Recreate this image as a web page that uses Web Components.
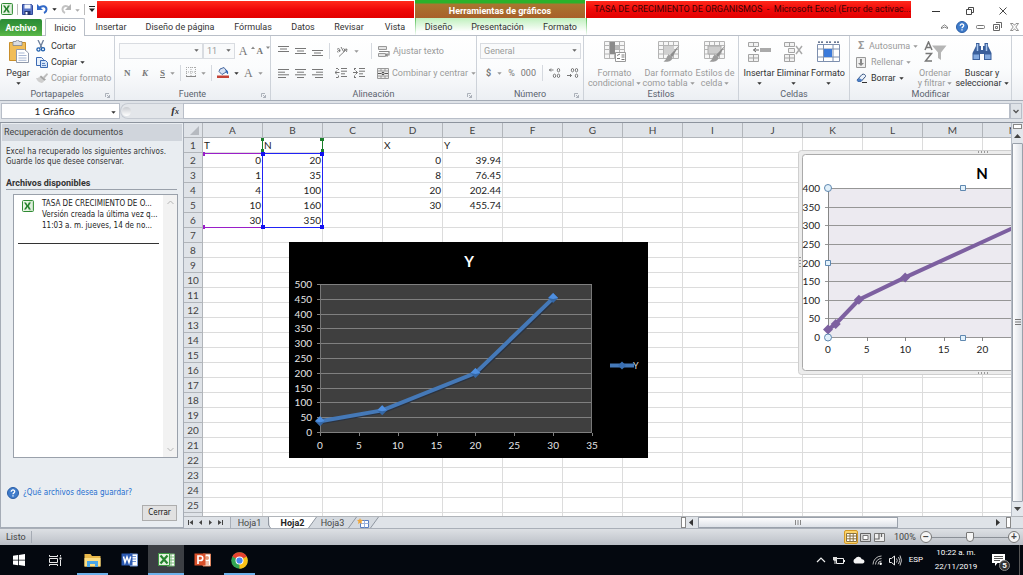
<!DOCTYPE html>
<html lang="es">
<head>
<meta charset="utf-8">
<title>TASA DE CRECIMIENTO DE ORGANISMOS - Microsoft Excel</title>
<style>
html,body{margin:0;height:100%;overflow:hidden}
body{font:9px/12px Roboto,"Open Sans",sans-serif;color:#333;background:#fff}
</style>
</head>
<body>
<excel-app></excel-app>
<script>
const RESET = `*{box-sizing:border-box}
button,input,select{font:inherit;color:inherit;background:none;border:0;margin:0;padding:0;border-radius:0;appearance:none;outline:0}
button{white-space:nowrap}a{color:inherit;text-decoration:none}svg{display:block;flex:none}`;

function make(css, html){
  const t = document.createElement('template');
  t.innerHTML = `<style>${RESET}${css}</style>${html}`;
  return t;
}
class BaseElement extends HTMLElement{
  constructor(){
    super();
    this.attachShadow({mode:'open'}).append(this.constructor.template.content.cloneNode(true));
  }
}

/* ---------- icons: [width, height, markup] ---------- */
const xl = `<rect x=".5" y=".5" width="11" height="11" rx="1" fill="#e9f5e4" stroke="#2f8a34"/><path d="M7 2h4v8H7z" fill="#fff" stroke="#7bb877" stroke-width=".5"/><path d="M7 4h4M7 6h4M7 8h4" stroke="#7bb877" stroke-width=".5"/><path d="M2 2.500h2L5.500 5 7 2.500h2L6.600 6 9 9.500H7L5.500 7 4 9.500H2L4.400 6z" fill="#23802b"/>`;
const grid3 = `<path d="M.5.5h20v17H.5zM.5 4.500h20M.5 8.500h20M.5 13h20M5.500.5v17M10.500.5v17M15.500.5v17" fill="#f6f6f6" stroke="#b4b4b4"/>`;
const brush = `<path d="M21.500 4l-9.500 10 2 2.500z" fill="#8d8d8d"/><path d="M12 14c-2 0-3 1-3.500 3S6 20 5.500 20.500c4 1 8.500 0 9-4z" fill="#9b9b9b"/>`;
const ICONS = {
  excel:[12,12,xl],
  save:[11,11,`<path d="M.5.5h9l1 1v9H.5z" fill="#5a76c8" stroke="#31489a"/><path d="M2.500.500h6v4h-6z" fill="#f3f6fc"/><path d="M2.500 7h6v4h-6z" fill="#25366f"/><path d="M3.500 8h2v2.500h-2z" fill="#fff"/>`],
  undo:[11,10,`<path d="M2 4C5 1 9.500 2 9.500 5.500 9.500 7.500 8 8.500 7 9" fill="none" stroke="#3269c8" stroke-width="2"/><path d="M0 0v6h6z" fill="#3269c8"/>`],
  redo:[10,10,`<path d="M8 3.500C5 1 1.500 2 1.500 5.500 1.500 7.500 3 8.500 4 9" fill="none" stroke="#c3c3c3" stroke-width="2"/><path d="M10 0v6H4z" fill="#b5b5b5"/>`],
  down:[5,3,`<path d="M.3.3h4.400L2.500 2.700z" fill="currentColor"/>`],
  caretup:[4,10,`<path d="M0 3L2 .5 4 3z" fill="#888"/>`],
  caretdn:[4,10,`<path d="M0 .5h4L2 3z" fill="#888"/>`],
  qat:[6,6,`<path d="M0 0h6v1H0zM0 2.500h6L3 6z" fill="#222"/>`],
  paste:[21,23,`<path d="M1.500 2.500h16v18h-16z" fill="#f1bd58" stroke="#c98f2b"/><path d="M5 1.500h3a1.500 1.500 0 013 0h3v4H5z" fill="#d9dde4" stroke="#7e8591" stroke-width=".8"/><path d="M8.500 9.500h8l4 3.500v9.500h-12z" fill="#fff" stroke="#9099ab"/><path d="M10.500 13h6M10.500 15.500h8M10.500 18h8M10.500 20.300h8" stroke="#9fb0cf" stroke-width=".9"/>`],
  cut:[10,12,`<path d="M2 0l4 8M7.500 0L4 8" stroke="#6d7f9b" stroke-width="1.300"/><circle cx="2.500" cy="9.500" r="1.600" fill="none" stroke="#1e5fae" stroke-width="1.300"/><circle cx="7" cy="9.200" r="1.600" fill="none" stroke="#1e5fae" stroke-width="1.300"/>`],
  copy:[12,11,`<path d="M.5.5h5l2 2v6h-7z" fill="#e7f0fb" stroke="#3b69b3"/><path d="M4.500 3.500h5l2 2v5h-7z" fill="#d3e3f8" stroke="#3b69b3"/><path d="M6 6.500h3M6 8.500h4" stroke="#3b69b3" stroke-width=".8"/>`],
  painter:[12,10,`<path d="M11 0L7 4l1.500 1.500L12 1.500z" fill="#bdbdbd"/><path d="M5 2.500l5 4L8 8 3.500 4z" fill="#a5a5a5"/><path d="M3.500 4C2 5 1.500 5 0 5c1 3 3 4.500 6 5 1-.5 1.500-1 2-2z" fill="#cfcfcf"/>`],
  border:[10,10,`<path d="M0 .5h10M0 5h10M.5 0v9M5 0v9M9.500 0v9" stroke="#aaa" stroke-dasharray="1 1"/><path d="M0 9.500h10" stroke="#888"/>`],
  fill:[12,12,`<path d="M3 3l4-1.500 3 4-5 3-3-3z" fill="#d6e2f4" stroke="#4a6aa0"/><path d="M9 3.500c2 1 2.500 3 2 4.500-1 .5-1.500-2-2.500-2.500z" fill="#2f66b5"/><path d="M0 9.500h12V12H0z" fill="#c44236"/>`],
  top:[11,10,`<path d="M0 .5h11M2 3h7M0 5.500h11" stroke="#777"/>`],
  mid:[11,10,`<path d="M0 2.500h11M2 5h7M0 7.500h11" stroke="#777"/>`],
  bot:[11,10,`<path d="M0 4.500h11M2 7h7M0 9.500h11" stroke="#777"/>`],
  left:[11,9,`<path d="M0 .5h11M0 3.200h7M0 5.800h11M0 8.500h8" stroke="#777"/>`],
  center:[11,9,`<path d="M0 .5h11M2 3.200h7M0 5.800h11M2 8.500h7" stroke="#777"/>`],
  right:[11,9,`<path d="M0 .5h11M4 3.200h7M0 5.800h11M3 8.500h8" stroke="#777"/>`],
  orient:[12,11,`<path d="M3 10.500L11 3M11 3l-3 .5M11 3l-.5 3" stroke="#888" fill="none"/><path d="M1 3.500c1-1.500 3-1 3 1L3.500 6M2 6.500C1 5.500 2 4 4 4.500M5 1l2.500 4.500c1.500-.5 1.500-2.500 0-3" stroke="#777" fill="none"/>`],
  outdent:[12,10,`<path d="M1 .5h2M6 .5h6M6 3.200h6M6 5.800h4M1 9.500h2M6 8.500h6" stroke="#777"/><path d="M4.500 4.500H0M2 2.500L0 4.500l2 2M3.500 1v1M3.500 7.500v2" stroke="#777" fill="none"/>`],
  indent:[12,10,`<path d="M1 .5h2M6 .5h6M6 3.200h6M6 5.800h4M1 9.500h2M6 8.500h6" stroke="#777"/><path d="M0 4.500h4.500M2.500 2.500l2 2-2 2M1.500 1v1M1.500 7.500v2" stroke="#777" fill="none"/>`],
  wrap:[12,11,`<path d="M.5.500h8v3h-8zM.5 7.500h7v3h-7z" fill="#e4e4e4" stroke="#999"/><path d="M1 5.500h10V9H8M9.500 7.500L8 9l1.500 1.500" stroke="#888" fill="none" stroke-width="1.200"/>`],
  merge:[12,11,`<path d="M.5.5h11v10H.5zM.5 3h11M.5 8h11M4 .5V3M8 .5V3M4 8v2.500M8 8v2.500" fill="#ececec" stroke="#999"/><path d="M1 5.500h3M8 5.500h3" stroke="#555"/><circle cx="6" cy="5.500" r="1.200" fill="none" stroke="#444"/>`],
  decplus:[12,10,`<path d="M4.500 2H0M2 .5L.5 2 2 3.500" stroke="#777" fill="none"/><g fill="none" stroke="#777"><ellipse cx="9.500" cy="2.200" rx="1.200" ry="1.700"/><ellipse cx="5.500" cy="7.800" rx="1.200" ry="1.700"/><ellipse cx="9.500" cy="7.800" rx="1.200" ry="1.700"/></g>`],
  decminus:[12,10,`<path d="M0 7.500h4.500M3 6l1.500 1.500L3 9" stroke="#777" fill="none"/><g fill="none" stroke="#777"><ellipse cx="5.500" cy="2.200" rx="1.200" ry="1.700"/><ellipse cx="9.500" cy="2.200" rx="1.200" ry="1.700"/><ellipse cx="9.500" cy="7.800" rx="1.200" ry="1.700"/></g>`],
  cond:[22,21,grid3+`<path d="M6 1h5v12H6z" fill="#8a8a8a"/><path d="M11 5h4v3h-4z" fill="#bbb"/><path d="M11.500 11.500h10v9h-10z" fill="#fff" stroke="#999"/><path d="M13 14.500l3-1.500M13 17.500h3M17.500 14h3M17.500 16h3M17.500 18.500h3" stroke="#777"/>`],
  tablefmt:[22,21,grid3+`<path d="M6 5h10v8H6z" fill="#d0d0d0"/>`+brush],
  cellfmt:[22,21,grid3+`<path d="M4 5h13v8H4z" fill="#cdcdcd" stroke="#aaa"/>`+brush],
  insert:[23,20,`<path d="M.5.5h10v4H.5zM5.500.5v4M.5 12.500h10v7H.5zM5.500 12.500v7M.5 16h10" fill="#f2f2f2" stroke="#a5a5a5"/><path d="M12 6h11v4H12z" fill="#aaa"/><path d="M11 8H5.500M8 6L5.500 8 8 10" stroke="#666" fill="none"/>`],
  delete:[19,20,`<path d="M.5.5h10v4H.5zM5.500.5v4M.5 12.500h10v7H.5zM5.500 12.500v7M.5 16h10M4.500 6.500h6v4h-6z" fill="#f2f2f2" stroke="#a5a5a5"/><path d="M12 4l6 8M18 4l-6 8" stroke="#aaa" stroke-width="1.500"/>`],
  format:[23,22,`<path d="M.5 3.500h22v17H.5zM.5 8h22M.5 16h22M6.500 3.500v17M16 3.500v17" fill="#fff" stroke="#7d8fae"/><path d="M7 8h8v8H7z" fill="#3c7bdb"/><path d="M1 1.200h6M9 1.200h6M17 1.200h5" stroke="#3b4d70" stroke-width="1.200" stroke-dasharray="2 1"/>`],
  filldown:[10,11,`<path d="M.5.5h9v10h-9z" fill="#eee" stroke="#999"/><path d="M4 2h2v4h2L5 9 2 6h2z" fill="#888"/>`],
  erase:[11,10,`<path d="M1 7l5-5.500c2-1 4 .5 3.500 2L5 8.500H2z" fill="#eaf1fb" stroke="#33527f"/><path d="M1 7c0 2 3 2 4 1.500L6.500 7 3 5z" fill="#4d7fc6"/><path d="M6 9.500h5" stroke="#333"/>`],
  sort:[23,21,`<path d="M8 4.500h14.500l-5.500 7V19l-3-2v-5.500z" fill="#b5b5b5"/><path d="M1 9L4.500 1 8 9M2 6.500h5M1.500 12.500h6l-6 7.500H8" fill="none" stroke="#777" stroke-width="1.500"/>`],
  find:[22,19,`<path d="M5 1h3.500v3H10v4h2V4h1.500V1H17v3l3.500 7v7H13v-6H9v6H1.500v-7L5 4z" fill="#3a5f9b"/><path d="M2.500 12.500h5.500v4.500H2.500zM14 12.500h5.500v4.500H14z" fill="#82a9df"/><path d="M6.500 2v7M15.500 2v7" stroke="#a9c7ef" stroke-width="1.500"/>`],
  launch:[5,5,`<path d="M.5 4V.500H4M2 2l2.500 2.500M4.500 2v2.500H2" fill="none" stroke="#9aa1ab" stroke-width=".8"/>`],
  chevup:[7,5,`<path d="M.5 3L3.500.8 6.500 3v1.500L3.500 3 .5 4.500z" fill="#fff" stroke="#666" stroke-width=".8"/>`],
  help:[12,12,`<circle cx="6" cy="6" r="5.500" fill="#3f7ccb" stroke="#2a5da5"/><path d="M4.200 4.700c0-2.400 3.700-2.200 3.500 0C7.600 6 6 5.800 6 7.300M6 8.300v1.300" fill="none" stroke="#fff" stroke-width="1.300"/>`],
  wmin:[9,4,`<rect x=".5" y=".5" width="8" height="3" rx="1" fill="#fff" stroke="#777"/>`],
  wres:[9,9,`<path d="M3 .5h5.500V6M.5 2.500h6v6h-6z" fill="none" stroke="#666"/><path d="M2.500 4.500h2v2h-2z" fill="none" stroke="#777"/>`],
  wclose:[9,8,`<path d="M.500.500h2.500l1.500 1.800L6 .5h2.500L5.800 4l2.700 3.500H6L4.500 5.700 3 7.500H.5L3.200 4z" fill="#fff" stroke="#777" stroke-width=".8"/>`],
  min:[8,8,`<path d="M0 4.500h8" stroke="#333"/>`],
  restore:[8,8,`<path d="M2.500 2V.5h5v5H6M.5 2.500h5v5h-5z" fill="none" stroke="#333" stroke-width=".9"/>`],
  close:[8,8,`<path d="M.5.5l7 7M7.500.5l-7 7" stroke="#333" stroke-width=".9"/>`],
  vdown:[6,5,`<path d="M.5 1L3 3.500 5.500 1" fill="none" stroke="#555" stroke-width="1.300"/>`],
  sup:[7,5,`<path d="M.5 4L3.500 1l3 3" fill="none" stroke="#b5b5b5"/>`],
  sdown:[7,5,`<path d="M.5 1l3 3 3-3" fill="none" stroke="#b5b5b5"/>`],
  tup:[7,4,`<path d="M0 4h7L3.500 0z" fill="#444"/>`],
  tdown:[7,4,`<path d="M0 0h7L3.500 4z" fill="#444"/>`],
  tleft:[4,7,`<path d="M4 0v7L0 3.500z" fill="#333"/>`],
  tright:[4,7,`<path d="M0 0v7l4-3.500z" fill="#333"/>`],
  first:[5,5,`<path d="M.5 0v5" stroke="#444"/><path d="M5 0v5L1.500 2.500z" fill="#444"/>`],
  prev:[5,5,`<path d="M4 0v5L1 2.500z" fill="#444"/>`],
  next:[5,5,`<path d="M1 0v5l3-2.500z" fill="#444"/>`],
  last:[5,5,`<path d="M4.500 0v5" stroke="#444"/><path d="M0 0v5l3.500-2.500z" fill="#444"/>`],
  edge1:[9,11,`<path d="M0 0h9v11H2z" fill="#fff"/><path d="M0 0h1l1 11H0z" fill="#d5dae0"/><path d="M.5 0v8l2 3" fill="none" stroke="#8f96a0"/>`],
  edge2:[9,11,`<path d="M0 0h8.500L.5 11H0z" fill="#fff"/><path d="M8.500 0H9v11H.5z" fill="#d5dae0"/><path d="M8.500 0l-8 11" stroke="#8f96a0"/>`],
  edge3:[9,11,`<path d="M0 0h8.500L.5 11H0z" fill="#d5dae0"/><path d="M8.500 0H9v11H.5z" fill="#d5dae0"/><path d="M8.500 0l-8 11" stroke="#8f96a0"/>`],
  edge4:[9,11,`<path d="M0 0h8.500L.5 11H0z" fill="#d5dae0"/><path d="M8.500 0l-8 11" stroke="#8f96a0"/>`],
  newsheet:[13,10,`<path d="M3.500 2.500h8v7h-8z" fill="#fff" stroke="#5b7fc0"/><path d="M3.500 5.500h8M7.500 2.500v7" stroke="#9ab2dd"/><path d="M3 0l.8 1.700L6 2 4.500 3.500 5 6 3 4.800 1 6l.5-2.500L0 2l2.200-.3z" fill="#f0a63a"/>`],
  vnormal:[11,9,`<path d="M.5.5h10v8H.5zM.5 3h10M.5 5.800h10M4 .5v8M7.200.5v8" fill="#fff" stroke="#8a7340"/>`],
  vpage:[11,9,`<path d="M.5.5h10v8H.5z" fill="#d5d5d5" stroke="#666"/><path d="M3 2.500h5v4H3z" fill="#fff" stroke="#777"/>`],
  vbreak:[11,9,`<path d="M.5.5h10v8H.5z" fill="#eee" stroke="#777"/><path d="M.5 6h4.500V.5M7.500.5V4" stroke="#666" fill="none" stroke-width="1.200"/>`],
  win:[12,12,`<path d="M0 1.700l5-.7v4.700H0zM5.800.9L12 0v5.700H5.800zM0 6.500h5v4.700l-5-.7zM5.800 6.500H12V12l-6.200-.9z" fill="#fff"/>`],
  taskview:[13,11,`<path d="M.5 3.500h8v4h-8zM.5 0v1.500h8V0M.5 11V9.500h8V11M11.500 0v1.500M11.500 5v6" fill="none" stroke="#e8e8e8"/><path d="M10.500 2.500h2v2h-2z" fill="#fff"/>`],
  folder:[17,15,`<path d="M.5 1h6l1.500 2h8.500v10.500H.5z" fill="#e9b84a"/><path d="M.5 5h16v8.500H.5z" fill="#fbdd83"/><path d="M3 8h11v6h-3v-3H6v3H3z" fill="#4aa6e8"/>`],
  word:[17,16,`<path d="M9 2h7.500v12H9z" fill="#fff" stroke="#6f93d2"/><path d="M10 4.500h5M10 7h5M10 9.500h5" stroke="#6f93d2"/><path d="M.5 1.500h11v12H.5z" fill="#2d5bb3"/><path d="M2.500 4.500l1.500 6 2-5.500 2 5.500 1.700-6" fill="none" stroke="#fff" stroke-width="1.500"/>`],
  xls:[17,16,`<path d="M9 2h7.500v12H9z" fill="#fff" stroke="#79b779"/><path d="M10 5h6M10 8h6M10 11h6M13 2v12" stroke="#79b779"/><path d="M.5 1.500h11v12H.5z" fill="#e4f2df" stroke="#3b9a40"/><path d="M2.500 3.500l7 8M9.500 3.500l-7 8" stroke="#278530" stroke-width="2.200"/>`],
  ppt:[17,16,`<path d="M9 2h7.500v12H9z" fill="#fff" stroke="#e08660"/><circle cx="13" cy="6" r="2" fill="#e79b78"/><path d="M11 10h4M11 12h4" stroke="#e08660"/><path d="M.5 1.500h11v12H.5z" fill="#d9502b"/><path d="M4 12V4h2.500c3 0 3 4.500 0 4.500H4" fill="none" stroke="#fff" stroke-width="1.700"/>`],
  chrome:[17,17,`<circle cx="8.500" cy="8.500" r="8.300" fill="#33a653"/><path d="M8.500 8.500L1.300 4.400a8.300 8.300 0 0114.400 0z" fill="#e6432f"/><path d="M8.500 8.500L15.700 4.400A8.300 8.300 0 018.500 16.800z" fill="#fbc116"/><path d="M8.500 4.400h7.200" stroke="#e6432f"/><circle cx="8.500" cy="8.500" r="4" fill="#fff"/><circle cx="8.500" cy="8.500" r="3.100" fill="#4687f0"/>`],
  trayup:[10,6,`<path d="M1 5l4-4 4 4" fill="none" stroke="#eee" stroke-width="1.200"/>`],
  battery:[12,9,`<path d="M3.500 2.500h7v5h-7z" fill="none" stroke="#eee"/><path d="M11 4h1v2h-1z" fill="#eee"/><path d="M0 1h4v3L2.500 5v3h-1V5L0 4z" fill="#ddd"/>`],
  cloud:[13,8,`<path d="M3 7.500a2.700 2.700 0 01.3-5 3.600 3.600 0 016.500.7c3-.2 3.700 4 .7 4.300z" fill="#f4f4f4"/>`],
  wifi:[10,10,`<path d="M1 9.500A8.500 8.500 0 019.500 1M3.500 9.500A6 6 0 019.500 3.500M6 9.500A3.500 3.500 0 019.500 6" fill="none" stroke="#bbb"/><circle cx="8.700" cy="8.700" r="1.200" fill="#fff"/>`],
  vol:[13,11,`<path d="M.5 3.500h2L5.500 1v9L2.500 7.500h-2z" fill="none" stroke="#eee"/><path d="M7.500 3.500q1.500 2 0 4M9.500 2q2.500 3.500 0 7M11 .5q3 5 0 10" fill="none" stroke="#ddd" stroke-width=".9"/>`],
  notif:[13,12,`<path d="M0 0h13v9H5.500L3 12V9H0z" fill="#fff"/><path d="M2 2.500h9M2 4.500h9M2 6.500h6" stroke="#444" stroke-width=".9"/>`],
  corner:[9,9,`<path d="M9 0v9H0z" fill="#b6bac0"/>`],
  grip:[6,5,`<path d="M.5 0v5M3 0v5M5.500 0v5" stroke="#888"/>`],
  gripv:[6,6,`<path d="M0 .5h6M0 3h6M0 5.500h6" stroke="#777"/>`]
};
class UiIcon extends BaseElement{
  static template = make(`:host{display:inline-block;flex:none}`, ``);
  connectedCallback(){
    const [w,h,m] = ICONS[this.getAttribute('name')];
    const box = document.createElement('div');
    box.innerHTML = `<svg width="${w}" height="${h}" viewBox="0 0 ${w} ${h}" aria-hidden="true">${m}</svg>`;
    this.shadowRoot.append(box);
  }
}
const ic = n => `<ui-icon name="${n}"></ui-icon>`;
customElements.define('ui-icon', UiIcon);

/* ---------- title bar ---------- */
customElements.define('title-bar', class extends BaseElement{
  static template = make(`
:host{display:flex;height:18px;background:#fff;color:#222}
.qat{display:flex;align-items:center;gap:4px;width:97px;padding-left:1px}
.qat i{width:1px;height:11px;background:#bbb}
.qat button{display:flex}
.qat .off{color:#aaa}
.red{background:linear-gradient(#ff2a1c,#f00808 50%,#e20000);margin-top:1px}
.a{flex:317 1 0;margin-right:1px}
.ctx{width:170px;background:linear-gradient(#2bb22b 3px,#a9762f 4px,#a8602a);color:#fff;font-weight:bold;text-align:center;padding-top:5px}
.doc{flex:317 1 0;margin-left:1px;color:#3a0505;line-height:17px;padding-left:8px;white-space:nowrap}
.win{display:flex;width:112px;padding:3px 3px 0 8px}
.win button{flex:1;display:flex;align-items:center;justify-content:center}`,
  `<div class="qat">${ic('excel')}<i></i><button aria-label="Guardar">${ic('save')}</button><button aria-label="Deshacer">${ic('undo')}</button>${ic('down')}<button aria-label="Rehacer">${ic('redo')}</button><span class="off">${ic('down')}</span><i></i>${ic('qat')}</div>
<div class="red a"></div><div class="ctx">Herramientas de gráficos</div>
<div class="red doc">TASA DE CRECIMIENTO DE ORGANISMOS&nbsp; -&nbsp; Microsoft Excel (Error de activac...</div>
<div class="win"><button aria-label="Minimizar">${ic('min')}</button><button aria-label="Restaurar">${ic('restore')}</button><button aria-label="Cerrar">${ic('close')}</button></div>`);
});

/* ---------- ribbon tabs ---------- */
customElements.define('ribbon-tabs', class extends BaseElement{
  static template = make(`
:host{display:flex;height:18px;border-bottom:1px solid #b9bfc8;background:#fff}
nav{display:flex;flex:1}
button{height:18px;line-height:18px;text-align:center}
.file{width:42px;margin:1px 3px 0 0;height:17px;background:linear-gradient(#2b8b35,#3f9e3c 60%,#5cb948);color:#fff;font-weight:bold;border-radius:2px 2px 0 0}
.on{width:40px;background:#fff;border:1px solid #b9bfc8;border-bottom:0;border-radius:2px 2px 0 0;margin-bottom:-1px}
.s{width:40px}.m{width:52px}.l{width:86px}.f{width:60px}
.ctx{display:flex;background:linear-gradient(#bff0bd,#fff 80%);border:solid;border-width:0 1px;border-image:linear-gradient(#4cbc4c,#fff) 1}
.ctx .c{width:45px}.ctx .p{width:73px}
.tools{display:flex;align-items:center;gap:8px;padding-right:4px}
.tools button{display:flex;align-items:center}`,
  `<nav><button class="file">Archivo</button><button class="on">Inicio</button><button class="m">Insertar</button><button class="l">Diseño de página</button><button class="f">Fórmulas</button><button class="s">Datos</button><button class="m">Revisar</button><button class="s">Vista</button>
<div class="ctx"><button class="c">Diseño</button><button class="p">Presentación</button><button class="m">Formato</button></div></nav>
<div class="tools"><button aria-label="Minimizar cinta">${ic('chevup')}</button><button aria-label="Ayuda">${ic('help')}</button><button aria-label="Minimizar libro">${ic('wmin')}</button><button aria-label="Restaurar libro">${ic('wres')}</button><button aria-label="Cerrar libro">${ic('wclose')}</button></div>`);
});

/* ---------- ribbon parts ---------- */
customElements.define('ribbon-group', class extends BaseElement{
  static template = make(`
:host{display:flex;flex-direction:column;height:64px;border-right:1px solid #cdd2d9;position:relative}
.body{flex:1;min-height:0}
.name{height:12px;line-height:12px;text-align:center;color:#5a626e}
.launch{position:absolute;right:4px;bottom:2px;display:flex}
:host([plain]) .launch{display:none}`,
  `<div class="body"><slot></slot></div><div class="name"></div><span class="launch">${ic('launch')}</span>`);
  connectedCallback(){ this.shadowRoot.querySelector('.name').textContent = this.getAttribute('label'); }
});
customElements.define('big-button', class extends BaseElement{
  static template = make(`
:host{display:block;color:#333}
:host([off]){color:#9a9a9a}
button{display:flex;flex-direction:column;align-items:center;width:100%;line-height:10px}
.pic{height:25px;display:flex;align-items:center;margin-bottom:4px}
.two{display:flex;align-items:center;gap:2px;height:10px}`,
  `<button><span class="pic"></span><span class="one"></span><span class="two"><span class="t"></span>${ic('down')}</span></button>`);
  connectedCallback(){
    const r = this.shadowRoot;
    r.querySelector('.pic').innerHTML = ic(this.getAttribute('icon'));
    r.querySelector('.one').textContent = this.getAttribute('label');
    const t = this.getAttribute('second');
    if(t) r.querySelector('.t').textContent = t; else r.querySelector('.t').remove();
  }
});
customElements.define('small-button', class extends BaseElement{
  static template = make(`
:host{display:block;color:#333}
:host([off]){color:#9a9a9a}
button{display:flex;align-items:center;gap:3px;height:16px}
.p{display:flex;width:12px}
.d{display:none}
:host([menu]) .d{display:flex}`,
  `<button><span class="p"></span><slot></slot><span class="d">${ic('down')}</span></button>`);
  connectedCallback(){
    const n = this.getAttribute('icon'), p = this.shadowRoot.querySelector('.p');
    if(n) p.innerHTML = ic(n); else p.remove();
    const l = this.getAttribute('label');
    if(l) this.shadowRoot.querySelector('button').setAttribute('aria-label', l);
  }
});
customElements.define('drop-box', class extends BaseElement{
  static template = make(`
:host{display:flex;align-items:center;position:relative;height:16px;border:1px solid #d9dce1;background:#f9fafb;color:#9a9a9a}
select{width:100%;height:14px;padding-left:3px;line-height:14px}
span{position:absolute;right:3px;top:5px;display:flex;pointer-events:none;color:#666}`,
  `<select><option></option></select><span>${ic('down')}</span>`);
  connectedCallback(){
    const s = this.shadowRoot.querySelector('select');
    s.setAttribute('aria-label', this.getAttribute('label'));
    s.options[0].textContent = this.getAttribute('value') || '';
  }
});
customElements.define('ribbon-bar', class extends BaseElement{
  static template = make(`
:host{display:flex;height:65px;background:linear-gradient(#fff,#fbfcfd 50%,#eceff3);border-bottom:1px solid #a4abb5}
.flex{display:flex}
.stack{display:flex;flex-direction:column;padding-top:2px}
.rows{display:flex;flex-direction:column;gap:6px;padding-top:7px}
.row{display:flex;align-items:center;height:16px}
.sep{width:1px;height:16px;background:#d5d9df}
.big{padding-top:3px}
.clip{width:115px}.font{width:156px}.align{width:206px}.num{width:107px}.sty{width:155px}.cell{width:111px}.mod{width:162px}
.clip big-button{width:36px}
.font .rows{padding-left:4px}
.g{color:#777;font:bold 9px/16px "Liberation Serif",serif}
.w{width:13px;text-align:left}
.lg{font-size:12px;font-weight:normal}
.align .row{gap:6px}
.off{color:#999;display:flex}`,
  `<ribbon-group class="clip" label="Portapapeles"><div class="flex"><big-button class="big" icon="paste" label="Pegar"></big-button>
<div class="stack"><small-button icon="cut">Cortar</small-button><small-button icon="copy" menu>Copiar</small-button><small-button icon="painter" off>Copiar formato</small-button></div></div></ribbon-group>
<ribbon-group class="font" label="Fuente"><div class="rows">
<div class="row"><drop-box label="Fuente" style="width:84px"></drop-box><drop-box label="Tamaño" value="11" style="width:32px"></drop-box><small-button label="Aumentar" style="margin-left:4px"><span class="g lg">A</span>${ic('caretup')}</small-button><small-button label="Disminuir" style="margin-left:2px"><span class="g">A</span>${ic('caretdn')}</small-button></div>
<div class="row" style="padding-left:5px;gap:5px"><button class="g w">N</button><button class="g w"><i>K</i></button><button class="g"><u>S</u></button><span class="off">${ic('down')}</span><i class="sep"></i><button>${ic('border')}</button><span class="off">${ic('down')}</span><i class="sep"></i><button>${ic('fill')}</button>${ic('down')}<button class="g lg">A</button><span class="off">${ic('down')}</span></div></div></ribbon-group>
<ribbon-group class="align" label="Alineación"><div class="rows" style="padding-left:7px">
<div class="row">${ic('top')}${ic('mid')}${ic('bot')}<i class="sep"></i>${ic('orient')}<span class="off">${ic('down')}</span><i class="sep" style="margin-left:6px"></i><small-button icon="wrap" off>Ajustar texto</small-button></div>
<div class="row">${ic('left')}${ic('center')}${ic('right')}<i class="sep"></i>${ic('outdent')}${ic('indent')}<i class="sep"></i><small-button icon="merge" off menu>Combinar y centrar</small-button></div></div></ribbon-group>
<ribbon-group class="num" label="Número"><div class="rows" style="padding-left:3px">
<div class="row"><drop-box label="Formato de número" value="General" style="width:101px"></drop-box></div>
<div class="row" style="padding-left:6px;gap:6px;color:#777"><b>$</b><span class="off">${ic('down')}</span><span>%</span><span>000</span><i class="sep"></i>${ic('decplus')}${ic('decminus')}</div></div></ribbon-group>
<ribbon-group class="sty" plain label="Estilos"><div class="flex big"><big-button off icon="cond" label="Formato" second="condicional" style="width:61px"></big-button><big-button off icon="tablefmt" label="Dar formato" second="como tabla" style="width:47px"></big-button><big-button off icon="cellfmt" label="Estilos de" second="celda" style="width:46px"></big-button></div></ribbon-group>
<ribbon-group class="cell" plain label="Celdas"><div class="flex big" style="padding-left:3px"><big-button icon="insert" label="Insertar" style="width:34px"></big-button><big-button icon="delete" label="Eliminar" style="width:34px"></big-button><big-button icon="format" label="Formato" style="width:36px"></big-button></div></ribbon-group>
<ribbon-group class="mod" plain label="Modificar"><div class="flex"><div class="stack" style="padding-left:6px;width:65px"><small-button off menu><b style="font-size:11px;width:10px">Σ</b>Autosuma</small-button><small-button icon="filldown" off menu>Rellenar</small-button><small-button icon="erase" menu>Borrar</small-button></div>
<big-button class="big" off icon="sort" label="Ordenar" second="y filtrar" style="width:40px"></big-button><big-button class="big" icon="find" label="Buscar y" second="seleccionar" style="width:54px"></big-button></div></ribbon-group>`);
});

/* ---------- formula bar ---------- */
customElements.define('formula-bar', class extends BaseElement{
  static template = make(`
:host{display:flex;height:22px;padding:2px 1px 3px;background:#dfe3e8;border-bottom:1px solid #8c939d}
.name{display:flex;align-items:center;width:119px;background:#fff;border:1px solid #b8bec8}
input{background:#fff;min-width:0}
.name input{flex:1;text-align:center;font-size:10px;font-family:Lato,"Open Sans",sans-serif;color:#222}
.name button{width:12px}
.fx{width:63px;display:flex;align-items:center;justify-content:space-between;padding:0 4px 0 1px;border-radius:8px 0 0 8px;border:1px solid #c5cad2;border-right:0;background:#e3e6ea}
.fx i{width:9px;height:9px;border-radius:5px;background:linear-gradient(#c9ccd1,#fff)}
.fx b{font:italic bold 11px/14px "Liberation Serif",serif;color:#333}
.fx small{font-size:8px}
.val{flex:1;border:1px solid #b8bec8}
.exp{width:12px;display:flex;align-items:center;justify-content:center;background:#dfe3e8;border:1px solid #b8bec8}`,
  `<div class="name"><input value="1 Gráfico" aria-label="Cuadro de nombres"><button aria-label="Nombres">${ic('down')}</button></div>
<div class="fx"><i></i><b>f<small>x</small></b></div><input class="val" aria-label="Barra de fórmulas"><button class="exp" aria-label="Expandir">${ic('vdown')}</button>`);
});

/* ---------- recovery pane ---------- */
customElements.define('recovery-pane', class extends BaseElement{
  static template = make(`
:host{display:flex;flex-direction:column;background:#e9edf1;border:1px solid #a5acb6;padding:1px 1px 6px;border-top:0;color:#333;font:8px/10px "DejaVu Sans Condensed","DejaVu Sans",sans-serif}
h2{margin:0;height:17px;font:9px/17px Roboto,"Open Sans",sans-serif;padding-left:2px;background:#d0d5dc;color:#444}
p{margin:6px 4px 0;white-space:nowrap}
h3{margin:11px 5px 0 4px;font:bold 9px/11px Roboto,"Open Sans",sans-serif;border-bottom:1px solid #9aa1ab}
.list{flex:1;display:flex;margin:4px 4px 0 11px;background:#fff;border:1px solid #9aa1ab}
.items{flex:1;min-width:0;padding:3px 4px}
.item{display:grid;grid-template-columns:24px 1fr;border-bottom:1px solid #333;padding-bottom:12px;line-height:11px;color:#222;white-space:nowrap}
.item ui-icon{margin:2px 0 0 4px}
.bar{width:14px;background:#f2f2f2;display:flex;flex-direction:column;align-items:center;justify-content:space-between;padding:5px 0}
.bar button{display:flex}
a{display:flex;align-items:center;gap:4px;color:#1f6fd0;margin:29px 0 0 5px}
.ok{align-self:flex-end;width:35px;height:16px;margin:6px 5px 0;border:1px solid #adadad;background:#e1e1e1;color:#111}`,
  `<h2>Recuperación de documentos</h2><p>Excel ha recuperado los siguientes archivos.<br>Guarde los que desee conservar.</p><h3>Archivos disponibles</h3>
<div class="list"><div class="items"><div class="item">${ic('excel')}<div>TASA DE CRECIMIENTO DE O...<br>Versión creada la última vez q...<br>11:03 a. m. jueves, 14 de no...</div></div></div>
<div class="bar"><button aria-label="Subir">${ic('sup')}</button><button aria-label="Bajar">${ic('sdown')}</button></div></div>
<a href="#">${ic('help')}<span>¿Qué archivos desea guardar?</span></a><button class="ok">Cerrar</button>`);
});

/* ---------- charts ---------- */
const diamond = (x,y,r,f) => `<path d="M${x} ${y-r}l${r} ${r}-${r} ${r}-${r}-${r}z" fill="${f}"/>`;
customElements.define('chart-y', class extends BaseElement{
  static template = make(`:host{display:block}text{font-family:Lato,"Open Sans",sans-serif}`, `<svg width="359" height="216" viewBox="0 0 359 216"></svg>`);
  connectedCallback(){
    const X = v => 31+v*272/35, Y = v => 191-v*148/500;
    let s = `<rect width="359" height="216" fill="#000"/><rect x="31" y="43" width="272" height="148" fill="#3f3f3f"/>`;
    for(let v=0;v<=500;v+=50){
      const y = Math.round(Y(v))-.5;
      s += `<path d="M28 ${y}H303" stroke="#808080"/><text x="23" y="${y+3}" text-anchor="end" font-size="10" fill="#e6e6e6">${v}</text>`;
    }
    for(let v=0;v<=35;v+=5) s += `<path d="M${Math.round(X(v))+.5} 191v3" stroke="#808080"/><text x="${X(v)}" y="207" text-anchor="middle" font-size="10" fill="#e6e6e6">${v}</text>`;
    s += `<path d="M31.500 43v148M302.500 43v148" stroke="#777"/>`;
    const p = [[0,39.94],[8,76.45],[20,202.44],[30,455.74]].map(([a,b])=>[X(a),Y(b)]);
    s += `<polyline points="${p.map(q=>(q[0]+1)+','+(q[1]+1)).join(' ')}" fill="none" stroke="#2b3340" stroke-width="4"/><polyline points="${p.join(' ')}" fill="none" stroke="#4579b8" stroke-width="4"/>`;
    s += p.map(q=>diamond(q[0],q[1],5,'#3567a5')+`<path d="M${q[0]} ${q[1]-5}l5 5-5 1-5-1z" fill="#4f8fe0"/>`).join('');
    s += `<path d="M321 123.500h24" stroke="#4579b8" stroke-width="4"/>${diamond(333,123.5,4,'#3a6fb2')}<text x="344" y="127" font-size="9" fill="#ddd">Y</text><text x="180" y="25" text-anchor="middle" font-size="15" font-weight="bold" fill="#fff">Y</text>`;
    this.shadowRoot.querySelector('svg').innerHTML = s;
  }
});
customElements.define('chart-n', class extends BaseElement{
  static template = make(`:host{display:block}text{font-family:Lato,"Open Sans",sans-serif}`, `<svg width="366" height="225" viewBox="0 0 366 225"></svg>`);
  connectedCallback(){
    const X = v => 30+v*7.72, Y = v => 187-v*149/400;
    let s = `<rect x=".5" y=".5" width="365" height="224" rx="3" fill="#ececec" stroke="#cfcfcf"/><rect x="4.500" y="4.500" width="357" height="216" rx="3" fill="#fff" stroke="#aaa"/><rect x="30" y="38" width="270" height="149" fill="#eceaf0"/>`;
    for(let v=0;v<=400;v+=50){
      const y = Math.round(Y(v))+.5;
      s += `<path d="M27 ${y}H300" stroke="#969696"/><text x="22" y="${y+3}" text-anchor="end" font-size="10" fill="#222">${v}</text>`;
    }
    for(let v=0;v<=35;v+=5) s += `<path d="M${Math.round(X(v))+.5} 187v4" stroke="#868686"/>`;
    for(let v=0;v<=20;v+=5) s += `<text x="${X(v)}" y="203" text-anchor="middle" font-size="10" fill="#222">${v}</text>`;
    s += `<path d="M30.500 38v149" stroke="#868686"/>`;
    const p = [[0,20],[1,35],[4,100],[10,160],[30,350]].map(([a,b])=>[X(a),Y(b)]);
    s += `<polyline points="${p.join(' ')}" fill="none" stroke="#7d60a0" stroke-width="4"/>` + p.map(q=>diamond(q[0],q[1],5,'#7d60a0')).join('');
    const h = 'fill="#e2f1fb" stroke="#5f88b0"';
    s += `<circle cx="30" cy="38" r="3.500" ${h}/><circle cx="30" cy="187.500" r="3.500" ${h}/><path d="M27.500 110.500h5v5h-5zM162.500 35.500h5v5h-5zM162.500 185.500h5v5h-5z" ${h}/>`;
    s += `<path d="M180 2h12M180 223h12" stroke="#999" stroke-dasharray="1 2" stroke-width="2"/><path d="M2 107v12" stroke="#999" stroke-dasharray="1 2" stroke-width="2"/>`;
    s += `<text x="184" y="29" text-anchor="middle" font-size="15" font-weight="bold" fill="#000">N</text>`;
    this.shadowRoot.querySelector('svg').innerHTML = s;
  }
});

/* ---------- worksheet ---------- */
customElements.define('sheet-grid', class extends BaseElement{
  static template = make(`
:host{display:block;position:relative;overflow:hidden;background:#fff}
table{border-collapse:separate;border-spacing:0;table-layout:fixed;width:859px;font:10px/14px Lato,"Open Sans",sans-serif;color:#222}
col{width:60px}col.h{width:19px}
tr{height:15px}
th{font-weight:normal;background:#dfe3e8;border:solid #b1b5ba;border-width:0 1px 1px 0;padding:0;color:#444}
thead th{height:15px}
td{border:solid #dcdcdc;border-width:0 1px 1px 0;padding:0 1px;text-align:right;height:15px}
td.t{text-align:left}
thead th:first-child ui-icon{display:block;margin:1px 0 0 6px}
.obj{position:absolute}
.marks{left:18px;top:14px}
.y{left:105px;top:119px}.n{left:614px;top:27px}`,
  `<table><colgroup></colgroup><thead></thead><tbody></tbody></table>
<svg class="obj marks" width="125" height="94"><path d="M1 16.500h59M1 90.500h59" stroke="#9a1fc9"/><path d="M60.500 2v13M120.500 2v13" stroke="#1b7f2b"/><path d="M60.500 16.500h60v74h-60z" fill="none" stroke="#2222f5"/><path d="M59 1h3v3h-3zM118 1h4v3h-4zM59 12h3v3h-3zM119 12h3v3h-3z" fill="#1b7f2b"/><path d="M1 15h2v4H1zM1 88h2v4H1z" fill="#9a1fc9"/><path d="M59 15h4v4h-4zM118 15h4v4h-4zM59 88h4v4h-4zM118 88h4v4h-4z" fill="#1111f0"/></svg>
<chart-y class="obj y"></chart-y><chart-n class="obj n"></chart-n>`);
  connectedCallback(){
    const cols = [...'ABCDEFGHIJKLMN'], r = this.shadowRoot;
    const data = {A:['T',0,1,4,10,30],B:['N',20,35,100,160,350],D:['X',0,8,20,30],E:['Y',39.94,76.45,202.44,455.74]};
    r.querySelector('colgroup').innerHTML = '<col class="h">' + '<col>'.repeat(cols.length);
    r.querySelector('thead').innerHTML = `<tr><th>${ic('corner')}</th>${cols.map(c=>`<th>${c}</th>`).join('')}</tr>`;
    let h = '';
    for(let i=0;i<26;i++) h += `<tr><th>${i<25?i+1:''}</th>${cols.map(c=>`<td${i?'':' class="t"'}>${data[c]?.[i] ?? ''}</td>`).join('')}</tr>`;
    r.querySelector('tbody').innerHTML = h;
  }
});
customElements.define('scroll-v', class extends BaseElement{
  static template = make(`
:host{display:flex;flex-direction:column;align-items:center;width:12px;background:#e3e7ec;border-left:1px solid #b6bcc5}
i{width:9px;height:5px;margin-top:1px;background:#fff;border:1px solid #888}
button{display:flex;justify-content:center}
.u,.d{padding:5px 0}
.thumb{flex:0 1 375px;min-height:20px;align-self:stretch;align-items:center;background:linear-gradient(90deg,#fdfdfe,#dde1e7);border:1px solid #9aa1ab;border-radius:1px}
s{flex:1}`,
  `<i></i><button class="u" aria-label="Arriba">${ic('tup')}</button><button class="thumb" aria-label="Desplazar" >${ic('gripv')}</button><s></s><button class="d" aria-label="Abajo">${ic('tdown')}</button>`);
});
customElements.define('sheet-tabs', class extends BaseElement{
  static template = make(`
:host{display:flex;height:12px;background:#dfe3e8;line-height:12px;border-top:1px solid #b1b5ba;color:#444}
.nav{display:flex;align-items:center;justify-content:space-between;width:46px;padding:0 7px 0 4px}
.nav button{display:flex}
.tab{width:31px;height:11px;line-height:12px;background:#d5dae0}
.first{width:38px;border-left:1px solid #a9afb8}
.on{background:#fff;font-weight:bold;color:#222}
.new{display:flex;align-items:center;height:11px;background:#d5dae0}
.h{margin-left:auto;flex:0 1 330px;display:flex;align-items:center}
.sp{width:5px;height:11px;background:#fff;border:1px solid #888}
.track{flex:1;display:flex;height:11px;margin:0 5px}
.h button{display:flex;align-items:center}
.h .thumb{flex:0 1 200px;justify-content:center;background:linear-gradient(#fdfdfe,#dde1e7);border:1px solid #9aa1ab}
.l{margin-left:3px}.r{margin-right:6px}
.c{width:12px}`,
  `<div class="nav"><button aria-label="Primera">${ic('first')}</button><button aria-label="Anterior">${ic('prev')}</button><button aria-label="Siguiente">${ic('next')}</button><button aria-label="Última">${ic('last')}</button></div>
<button class="tab first">Hoja1</button>${ic('edge1')}<button class="tab on">Hoja2</button>${ic('edge2')}<button class="tab">Hoja3</button>${ic('edge3')}<button class="new" aria-label="Insertar hoja">${ic('newsheet')}</button>${ic('edge4')}
<div class="h"><span class="sp"></span><button class="l" aria-label="Izquierda">${ic('tleft')}</button><div class="track"><button class="thumb" aria-label="Desplazar">${ic('grip')}</button></div><button class="r" aria-label="Derecha">${ic('tright')}</button><span class="sp"></span></div><span class="c"></span>`);
});

/* ---------- status bar ---------- */
customElements.define('status-bar', class extends BaseElement{
  static template = make(`
:host{display:flex;align-items:center;height:17px;background:linear-gradient(#dde0e4,#c9cdd3 60%,#b9bec5);padding:0 3px 0 6px;color:#444;border-top:1px solid #a9afb8}
.l{width:26px;border-right:1px solid #a5abb4}
.r{margin-left:auto;display:flex;align-items:center}
.v{display:flex;align-items:center;justify-content:center;width:14px;height:14px}
.on{background:#fbd46d;border:1px solid #d69a24;border-radius:2px}
.z{width:22px;margin:0 4px 0 8px}
.b{width:12px;height:12px;border-radius:6px;border:1px solid #777;background:#f5f5f5;display:flex;align-items:center;justify-content:center;font:bold 10px/10px "Liberation Sans",sans-serif;color:#444}
input{width:76px;height:12px;background:linear-gradient(#8a8f96,#8a8f96) center/100% 1px no-repeat}
input::-webkit-slider-thumb{appearance:none;width:8px;height:10px;background:#f5f5f5;border:1px solid #777;border-radius:1px 1px 4px 4px}`,
  `<div class="l">Listo</div><div class="r"><button class="v on" aria-label="Normal">${ic('vnormal')}</button><button class="v" aria-label="Diseño">${ic('vpage')}</button><button class="v" aria-label="Saltos">${ic('vbreak')}</button><span class="z">100%</span><button class="b" aria-label="Alejar">−</button><input type="range" aria-label="Zoom" value="50"><button class="b" aria-label="Acercar">+</button></div>`);
});

/* ---------- taskbar ---------- */
customElements.define('task-bar', class extends BaseElement{
  static template = make(`
:host{display:flex;height:30px;background:#04080f;color:#fff;font-size:8px}
.apps{display:flex}
button{display:flex;align-items:center;justify-content:center}
.apps button{width:37px;height:30px;border:solid transparent;border-width:2px 0}
.apps .run{border-bottom-color:#6cb1ea;width:31px;margin:0 3px}
.apps .act{background:#3c3f44;border-bottom-color:#6cb1ea;width:36px}
.tray{margin-left:auto;display:flex;align-items:center;gap:7px}
.clock{text-align:center;line-height:14px;width:46px;margin-left:3px}
.n{position:relative;margin:0 14px 0 6px}
.n b{position:absolute;left:7px;top:6px;width:11px;height:11px;border-radius:6px;background:#333;border:1px solid #888;line-height:9px}
.end{width:4px;height:30px;border-left:1px solid #555;margin-left:-7px}`,
  `<div class="apps"><button aria-label="Inicio">${ic('win')}</button><button aria-label="Vista de tareas">${ic('taskview')}</button><button class="run" aria-label="Explorador">${ic('folder')}</button><button aria-label="Word">${ic('word')}</button><button class="act" aria-label="Excel">${ic('xls')}</button><button aria-label="PowerPoint">${ic('ppt')}</button><button class="run" aria-label="Chrome">${ic('chrome')}</button></div>
<div class="tray">${ic('trayup')}${ic('battery')}${ic('cloud')}${ic('wifi')}${ic('vol')}<span>ESP</span><div class="clock">10:22 a. m.<br>22/11/2019</div><button class="n" aria-label="Notificaciones">${ic('notif')}<b>5</b></button><span class="end"></span></div>`);
});

/* ---------- shell ---------- */
customElements.define('excel-app', class extends BaseElement{
  static template = make(`
:host{display:flex;flex-direction:column;height:100vh;min-width:0}
main{flex:1;min-height:0;display:grid;grid-template-columns:184px 1fr;background:#dfe3e8}
.book{display:flex;flex-direction:column;min-width:0;min-height:0}
.top{flex:1;display:flex;min-height:0}
sheet-grid{flex:1;min-width:0}
recovery-pane{min-height:0}`,
  `<title-bar></title-bar><ribbon-tabs></ribbon-tabs><ribbon-bar></ribbon-bar><formula-bar></formula-bar>
<main><recovery-pane></recovery-pane><div class="book"><div class="top"><sheet-grid></sheet-grid><scroll-v></scroll-v></div><sheet-tabs></sheet-tabs></div></main>
<status-bar></status-bar><task-bar></task-bar>`);
});
</script>
</body>
</html>
